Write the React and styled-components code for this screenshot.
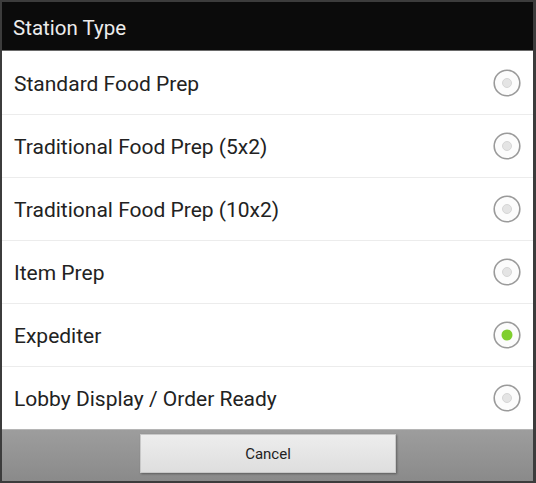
import React from 'react';
import styled, { createGlobalStyle } from 'styled-components';

const GlobalStyle = createGlobalStyle`
  html, body {
    margin: 0;
    padding: 0;
    background: #fff;
  }
  body {
    font-family: Roboto, 'Noto Sans', sans-serif;
  }
`;

const Dialog = styled.div`
  width: 536px;
  height: 483px;
  box-sizing: border-box;
  border: 2px solid #3c3c3c;
  border-right-width: 3px;
  display: flex;
  flex-direction: column;
  background: #fff;
`;

const Header = styled.div`
  height: 49px;
  background: #0b0b0b;
  color: #ececec;
  font-size: 20.5px;
  display: flex;
  align-items: center;
  padding-left: 11px;
  padding-top: 3px;
  box-sizing: border-box;
  border-bottom: 1px solid #6a6a6a;
`;

const List = styled.div`
  display: flex;
  flex-direction: column;
`;

const Row = styled.div`
  height: 63px;
  display: flex;
  align-items: center;
  justify-content: space-between;
  padding: 0 11px 0 12px;
  box-sizing: border-box;
  border-top: ${p => (p.first ? 'none' : '1px solid #ececec')};
`;

const Label = styled.span`
  font-size: 21px;
  color: #222;
  padding-top: 2px;
`;

const Footer = styled.div`
  flex: 1;
  background: linear-gradient(#9d9d9d, #8a8a8a);
  border-top: 1px solid #b5b5b5;
  display: flex;
  justify-content: center;
  align-items: flex-start;
  padding-top: 4px;
  box-sizing: border-box;
`;

const Button = styled.button`
  width: 256px;
  height: 39px;
  margin-left: 1px;
  border: 1px solid #c8c8c8;
  background: linear-gradient(#ededed, #dedede);
  box-shadow: 1px 1px 2px rgba(0, 0, 0, 0.35);
  font-family: Roboto, 'Noto Sans', sans-serif;
  font-size: 15px;
  color: #222;
`;

const Radio = ({ checked }) => (
  <svg width="30" height="30" viewBox="0 0 30 30">
    <circle cx="15" cy="15" r="12.8" fill="#fcfcfc" stroke="#9a9a9a" strokeWidth="1.6" />
    {checked ? (
      <circle cx="15" cy="15" r="5.5" fill="#7fcf2e" />
    ) : (
      <circle cx="15" cy="15" r="4.5" fill="#e4e4e4" stroke="#d6d6d6" strokeWidth="1" />
    )}
  </svg>
);

const items = [
  'Standard Food Prep',
  'Traditional Food Prep (5x2)',
  'Traditional Food Prep (10x2)',
  'Item Prep',
  'Expediter',
  'Lobby Display / Order Ready',
];

export default function App() {
  return (
    <>
      <GlobalStyle />
      <Dialog>
        <Header>Station Type</Header>
        <List>
          {items.map((e, i) => (
            <Row key={e} first={i === 0}>
              <Label>{e}</Label>
              <Radio checked={e === 'Expediter'} />
            </Row>
          ))}
        </List>
        <Footer>
          <Button>Cancel</Button>
        </Footer>
      </Dialog>
    </>
  );
}
